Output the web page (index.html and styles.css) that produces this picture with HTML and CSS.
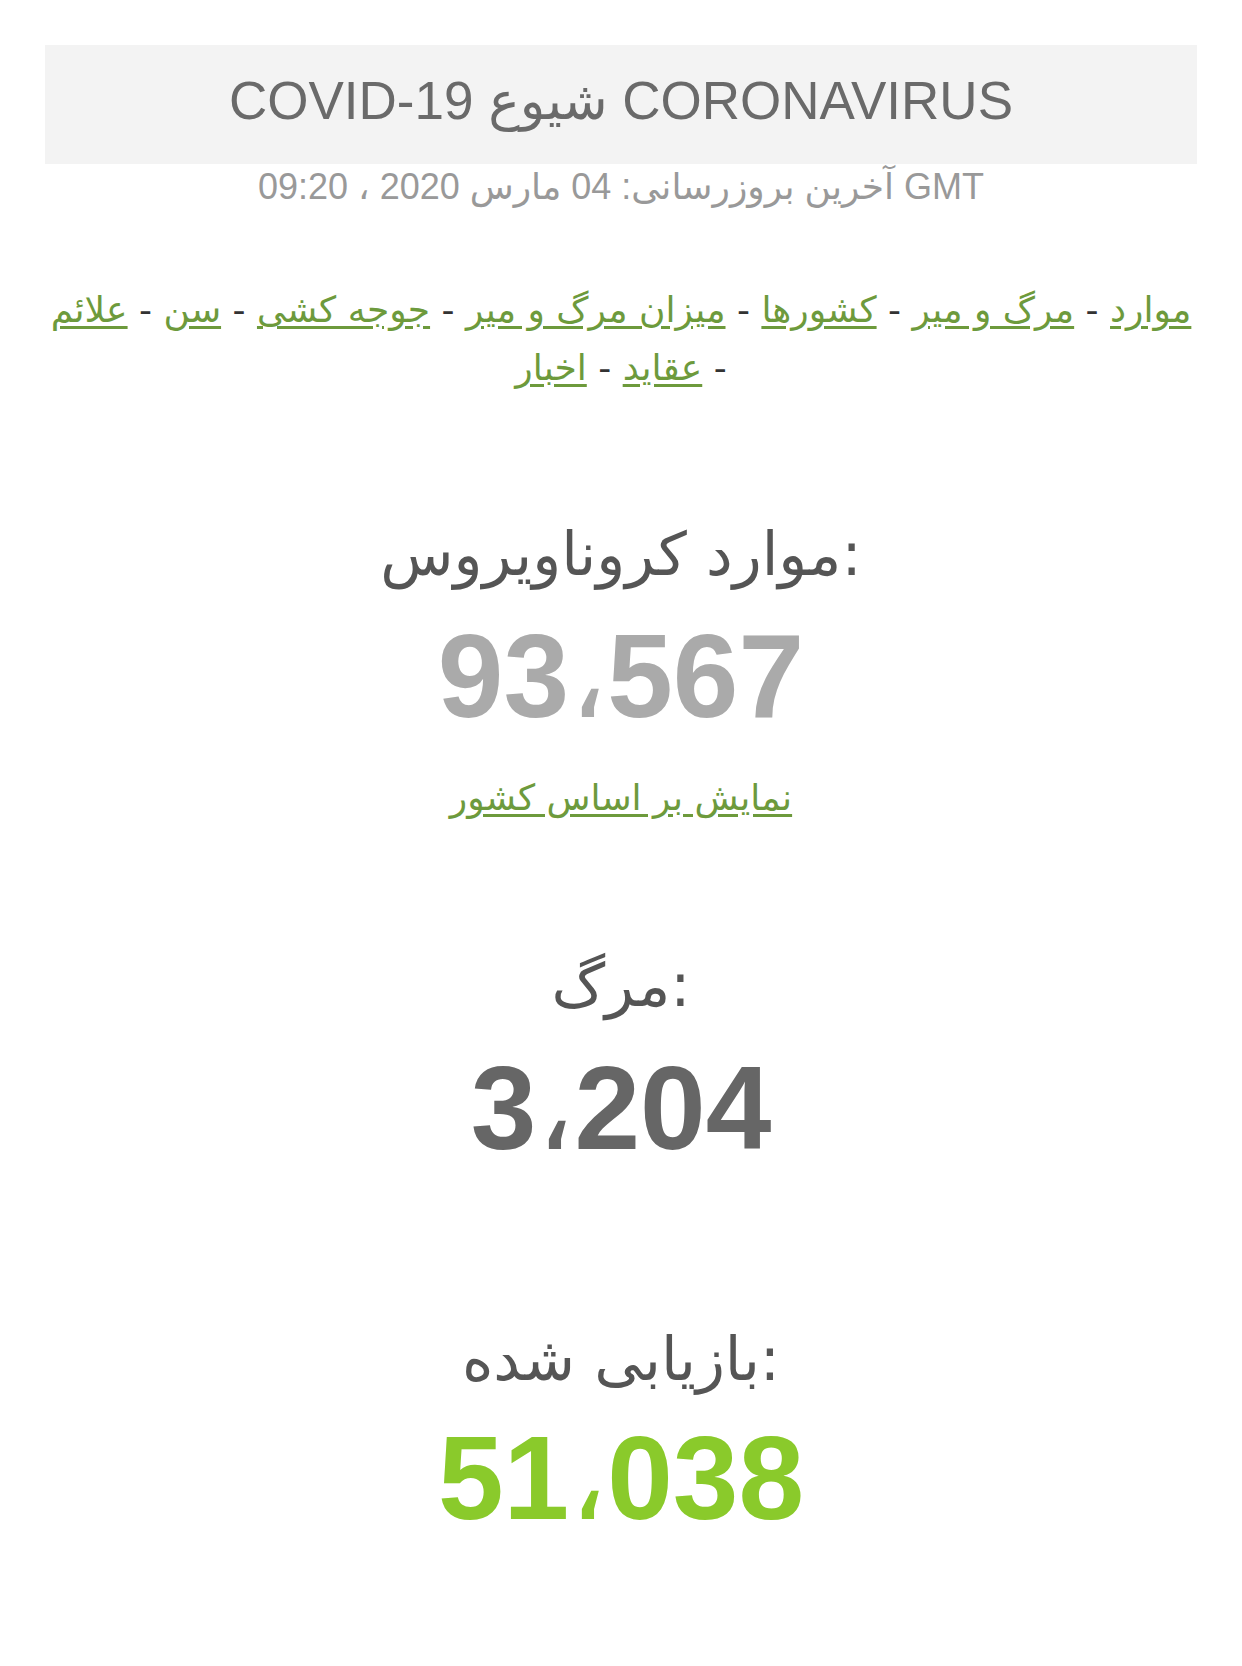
FILE: index.html
```html
<!DOCTYPE html>
<html lang="fa">
<head>
<meta charset="utf-8">
<title>COVID-19 شیوع CORONAVIRUS</title>
<link rel="stylesheet" href="styles.css">
</head>
<body>
<div class="page">
  <header class="banner">
    <h1 class="title" dir="ltr">COVID-19 شیوع CORONAVIRUS</h1>
  </header>
  <div class="updated" dir="ltr">آخرین بروزرسانی: 04 مارس 2020 ، 09:20 GMT</div>

  <nav class="nav" dir="rtl">
    <a href="#">موارد</a> - <a href="#">مرگ و میر</a> - <a href="#">کشورها</a> - <a href="#">میزان مرگ و میر</a> - <a href="#">جوجه کشی</a> - <a href="#">سن</a> - <a href="#">علائم</a> - <a href="#">عقاید</a> - <a href="#">اخبار</a>
  </nav>

  <section class="stat stat-cases">
    <h2 class="stat-label" dir="ltr">موارد کروناویروس:</h2>
    <div class="stat-number num-cases">93<span class="sep">،</span>567</div>
    <a class="stat-link" href="#">نمایش بر اساس کشور</a>
  </section>

  <section class="stat stat-deaths">
    <h2 class="stat-label" dir="ltr">مرگ:</h2>
    <div class="stat-number num-deaths">3<span class="sep">،</span>204</div>
  </section>

  <section class="stat stat-recovered">
    <h2 class="stat-label" dir="ltr">بازیابی شده:</h2>
    <div class="stat-number num-recovered">51<span class="sep">،</span>038</div>
  </section>
</div>
</body>
</html>
```
FILE: styles.css
```css
html, body {
  margin: 0;
  padding: 0;
  background: #ffffff;
}

body {
  font-family: "Liberation Sans", "DejaVu Sans", Arial, sans-serif;
  color: #555555;
}

.page {
  display: flex;
  flex-direction: column;
  align-items: center;
  text-align: center;
  padding-top: 45px;
}

.banner {
  box-sizing: border-box;
  width: calc(100% - 90px);
  height: 119px;
  background: #f3f3f3;
  display: flex;
  align-items: center;
  justify-content: center;
}

.title {
  margin: 0;
  font-weight: normal;
  font-size: 53px;
  line-height: 1;
  color: #6a6a6a;
  padding-bottom: 8px;
}

.updated {
  font-size: 36px;
  line-height: 46px;
  color: #999999;
}

.nav {
  box-sizing: border-box;
  width: 100%;
  padding: 0 46px;
  margin-top: 71px;
  font-family: "DejaVu Sans", sans-serif;
  font-size: 36px;
  line-height: 58px;
  color: #333333;
}

.nav a {
  color: #6d9a3c;
  text-decoration: underline;
  text-underline-offset: 4px;
}

.stat {
  display: flex;
  flex-direction: column;
  align-items: center;
}

.stat-label {
  margin: 0;
  font-family: "DejaVu Sans", sans-serif;
  font-weight: normal;
  font-size: 60px;
  line-height: 70px;
  color: #555555;
}

.stat-number {
  font-family: "Liberation Sans", "DejaVu Sans", sans-serif;
  font-weight: bold;
  font-size: 118px;
  line-height: 120px;
}

.sep {
  font-family: "DejaVu Sans", sans-serif;
  font-weight: normal;
  font-size: 118px;
  line-height: 0;
}

.stat-link {
  font-family: "DejaVu Sans", sans-serif;
  font-size: 36px;
  line-height: 50px;
  color: #6d9a3c;
  text-decoration: underline;
  text-underline-offset: 4px;
  margin-top: 37px;
}

.stat-cases { margin-top: 122px; }
.stat-cases .stat-number { margin-top: 27px; }

.stat-deaths { margin-top: 127px; }
.stat-deaths .stat-number { margin-top: 28px; }

.stat-recovered { margin-top: 156px; }
.stat-recovered .stat-number { margin-top: 24px; }

.num-cases { color: #aaaaaa; }
.num-deaths { color: #666666; }
.num-recovered { color: #8aca2b; }
```
